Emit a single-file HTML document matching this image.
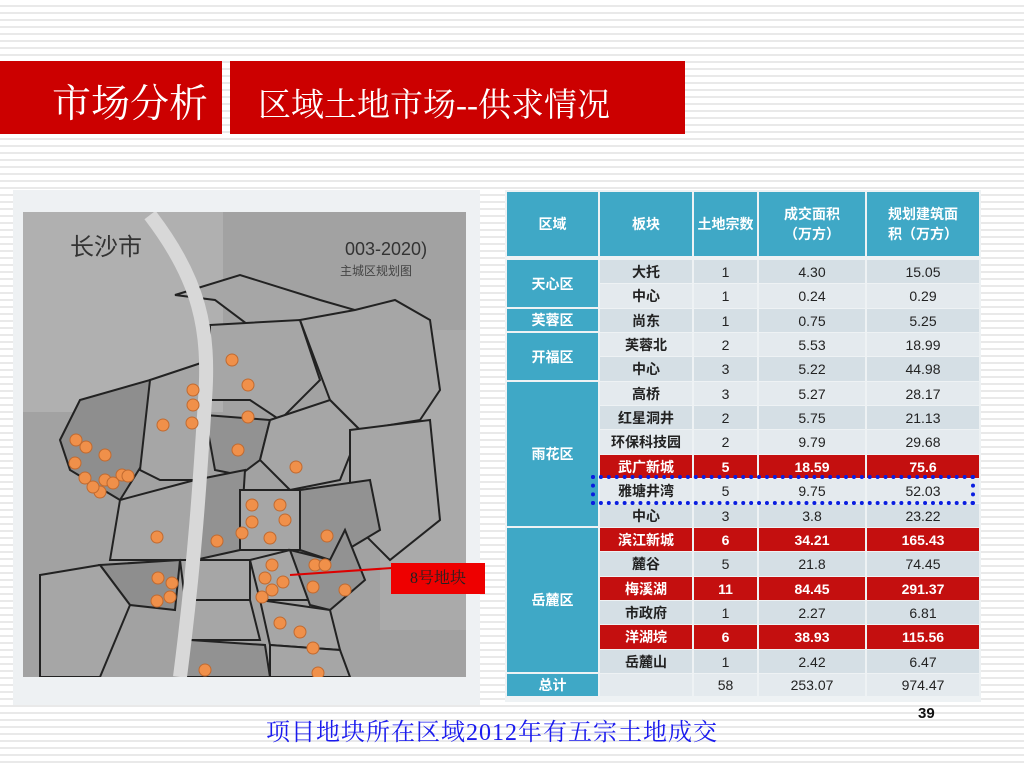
<!DOCTYPE html>
<html><head><meta charset="utf-8"><style>
body{margin:0;width:1024px;height:768px;position:relative;overflow:hidden;background:#fff repeating-linear-gradient(180deg,#fff 0,#fff 5px,#e9e9e9 5px,#e9e9e9 7px);font-family:"Liberation Sans","Noto Sans CJK SC",sans-serif}
.a{position:absolute}
.red{background:#cc0000;color:#fff;font-family:"Liberation Serif","Noto Serif CJK SC",serif}
.c{position:absolute;display:flex;align-items:center;justify-content:center;font-size:14px;color:#222;box-sizing:border-box}
.h{background:#3fa8c6;color:#fff;font-weight:bold}
.b{font-weight:bold}
.r{background:#c40f0f;color:#fff;font-weight:bold}
</style></head><body>
<div class="a red" style="left:0;top:61px;width:222px;height:73px;"></div>
<div class="a" style="left:52px;top:73px;font-size:39px;color:#fff;font-family:'Liberation Serif','Noto Serif CJK SC',serif">市场分析</div>
<div class="a red" style="left:230px;top:61px;width:455px;height:73px;"></div>
<div class="a" style="left:258px;top:79px;font-size:33px;color:#fff;font-family:'Liberation Serif','Noto Serif CJK SC',serif">区域土地市场--供求情况</div>

<div class="a" style="left:13px;top:190px;width:467px;height:515px;background:#eef1f3"></div>
<svg class="a" style="left:23px;top:212px" width="443" height="465" viewBox="23 212 443 465">
<rect x="23" y="212" width="443" height="465" fill="#a2a2a2"/>
<rect x="23" y="212" width="200" height="200" fill="#b0b0b0"/>
<rect x="380" y="330" width="86" height="300" fill="#aaa"/>
<g stroke="#222" stroke-width="2" fill="#a6a6a6">
<polygon points="175,295 240,275 320,300 355,310 340,360 300,355 255,330 215,300"/>
<polygon points="210,325 300,320 320,380 280,420 250,400 210,400"/>
<polygon points="300,320 355,310 395,300 430,320 440,390 420,420 360,430 330,400"/>
<polygon points="60,440 80,400 150,380 175,420 145,460 120,500 70,470" fill="#8e8e8e"/>
<polygon points="150,380 210,360 195,480 160,480 140,470"/>
<polygon points="205,415 270,420 260,460 240,475 215,470" fill="#929292"/>
<polygon points="270,420 330,400 360,430 340,480 290,490 260,460"/>
<polygon points="350,430 430,420 440,520 390,560 350,520"/>
<polygon points="120,500 195,480 190,560 110,560"/>
<polygon points="195,480 245,470 240,550 195,560" fill="#929292"/>
<polygon points="240,490 300,490 305,550 240,550"/>
<polygon points="300,490 370,480 380,530 330,560 300,550" fill="#929292"/>
<polygon points="100,565 180,560 175,610 130,605" fill="#8e8e8e"/>
<polygon points="180,560 250,560 250,600 185,600"/>
<polygon points="250,560 290,550 310,600 260,600"/>
<polygon points="290,550 330,560 345,530 365,580 330,610 310,605" fill="#929292"/>
<polygon points="185,600 250,600 260,640 190,640"/>
<polygon points="260,600 330,610 340,650 270,645"/>
<polygon points="40,575 100,565 130,605 100,677 40,677"/>
<polygon points="190,640 265,645 270,677 185,677" fill="#929292"/>
<polygon points="270,645 340,650 350,677 270,677"/>
</g>
<path d="M150,215 C200,280 210,330 205,400 C200,480 195,560 180,677" stroke="#d8d8d8" stroke-width="14" fill="none"/>
<text x="70" y="255" font-size="24" fill="#333">长沙市</text>
<text x="345" y="255" font-size="18" fill="#333">003-2020)</text>
<text x="340" y="275" font-size="12" fill="#444">主城区规划图</text>
<g fill="#f0904a" stroke="#c06a30" stroke-width="1">
<circle cx="232" cy="360" r="6"/><circle cx="248" cy="385" r="6"/><circle cx="248" cy="417" r="6"/><circle cx="238" cy="450" r="6"/><circle cx="296" cy="467" r="6"/><circle cx="193" cy="390" r="6"/><circle cx="193" cy="405" r="6"/><circle cx="192" cy="423" r="6"/><circle cx="163" cy="425" r="6"/><circle cx="86" cy="447" r="6"/><circle cx="76" cy="440" r="6"/><circle cx="105" cy="455" r="6"/><circle cx="75" cy="463" r="6"/><circle cx="85" cy="478" r="6"/><circle cx="105" cy="480" r="6"/><circle cx="122" cy="475" r="6"/><circle cx="100" cy="492" r="6"/><circle cx="128" cy="476" r="6"/><circle cx="93" cy="487" r="6"/><circle cx="113" cy="483" r="6"/><circle cx="157" cy="537" r="6"/><circle cx="158" cy="578" r="6"/><circle cx="172" cy="583" r="6"/><circle cx="157" cy="601" r="6"/><circle cx="170" cy="597" r="6"/><circle cx="217" cy="541" r="6"/><circle cx="252" cy="505" r="6"/><circle cx="252" cy="522" r="6"/><circle cx="280" cy="505" r="6"/><circle cx="285" cy="520" r="6"/><circle cx="242" cy="533" r="6"/><circle cx="270" cy="538" r="6"/><circle cx="327" cy="536" r="6"/><circle cx="315" cy="565" r="6"/><circle cx="325" cy="565" r="6"/><circle cx="345" cy="590" r="6"/><circle cx="265" cy="578" r="6"/><circle cx="272" cy="565" r="6"/><circle cx="283" cy="582" r="6"/><circle cx="272" cy="590" r="6"/><circle cx="262" cy="597" r="6"/><circle cx="280" cy="623" r="6"/><circle cx="300" cy="632" r="6"/><circle cx="313" cy="648" r="6"/><circle cx="318" cy="673" r="6"/><circle cx="205" cy="670" r="6"/><circle cx="313" cy="587" r="6"/>
</g>
<line x1="290" y1="575" x2="392" y2="568" stroke="#d00" stroke-width="2"/>
</svg>
<div class="a" style="left:391px;top:563px;width:94px;height:31px;background:#ee0000;color:#222;font-size:16px;line-height:31px;text-align:center;font-family:'Liberation Serif','Noto Serif CJK SC',serif">8号地块</div>

<div class="a" style="left:505px;top:190px;width:476px;height:512px;background:#eef2f4"></div>
<div id="t"></div>
<script>
var cols=[[507,91],[600,92],[694,63],[759,106],[867,112]];
var H=document.getElementById('t');
function cell(x,y,w,h,txt,cls){var d=document.createElement('div');d.className='c '+(cls||'');d.style.cssText='left:'+x+'px;top:'+y+'px;width:'+w+'px;height:'+h+'px;';d.innerHTML=txt;H.appendChild(d);}
var hd=['区域','板块','土地宗数','成交面积<br>（万方）','规划建筑面<br>积（万方）'];
hd.forEach(function(t,i){cell(cols[i][0],192,cols[i][1],64,t,'h');});
var rows=[['大托','1','4.30','15.05'],['中心','1','0.24','0.29'],['尚东','1','0.75','5.25'],['芙蓉北','2','5.53','18.99'],['中心','3','5.22','44.98'],['高桥','3','5.27','28.17'],['红星洞井','2','5.75','21.13'],['环保科技园','2','9.79','29.68'],['武广新城','5','18.59','75.6',1],['雅塘井湾','5','9.75','52.03'],['中心','3','3.8','23.22'],['滨江新城','6','34.21','165.43',1],['麓谷','5','21.8','74.45'],['梅溪湖','11','84.45','291.37',1],['市政府','1','2.27','6.81'],['洋湖垸','6','38.93','115.56',1],['岳麓山','1','2.42','6.47']];
var rh=24.35,y0=260;
rows.forEach(function(r,k){var y=Math.round(y0+k*rh),h=Math.round(y0+(k+1)*rh)-y-1;
 for(var i=0;i<4;i++){
  cell(cols[i+1][0],y,cols[i+1][1],h,r[i],r[4]?'r':(i==0?'b':''));
  if(!r[4])H.lastChild.style.background=(k%2?'#e4eaee':'#d5dfe5');}});
var reg=[['天心区',0,2],['芙蓉区',2,1],['开福区',3,2],['雨花区',5,6],['岳麓区',11,6]];
reg.forEach(function(g){var y=Math.round(y0+g[1]*rh);cell(507,y,91,Math.round(y0+(g[1]+g[2])*rh)-y-2,g[0],'h');});
var yt=Math.round(y0+17*rh);
cell(507,yt,91,22,'总计','h');
cell(600,yt,92,22,'','');H.lastChild.style.background='#e4eaee';
cell(694,yt,63,22,'58','');H.lastChild.style.background='#e4eaee';
cell(759,yt,106,22,'253.07','');H.lastChild.style.background='#e4eaee';
cell(867,yt,112,22,'974.47','');H.lastChild.style.background='#e4eaee';
</script>
<div class="a" style="left:591px;top:475px;width:376px;height:22px;border:4px dotted #0a1ee0"></div>
<div class="a" style="left:918px;top:705px;font-size:15px;font-weight:bold;color:#111">39</div>
<div class="a" style="left:266px;top:712px;font-size:24px;letter-spacing:1px;color:#1a1aee;font-family:'Liberation Serif','Noto Serif CJK SC',serif">项目地块所在区域2012年有五宗土地成交</div>
</body></html>
